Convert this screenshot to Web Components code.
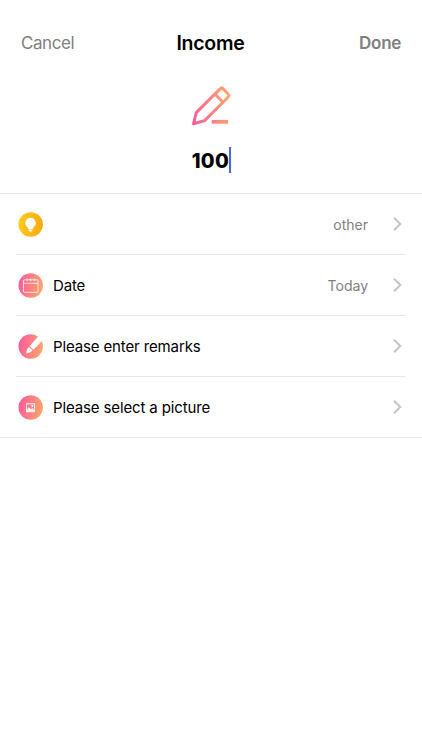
<!DOCTYPE html>
<html lang="en">
<head>
<meta charset="utf-8">
<title>Income</title>
<style>
html,body{margin:0;background:#fff}
body{font-family:Inter,"Liberation Sans",sans-serif;color:#000}
</style>
</head>
<body>
<income-page></income-page>

<template id="t-page">
<style>:host{display:flex;flex-direction:column;height:750px;overflow:hidden;background:#fff}</style>
<nav-bar><span slot="left">Cancel</span><span slot="title">Income</span><span slot="right">Done</span></nav-bar>
<amount-input>100</amount-input>
<entry-list>
<entry-row icon="bulb"><span slot="value">other</span></entry-row>
<entry-row icon="calendar">Date<span slot="value">Today</span></entry-row>
<entry-row icon="brush">Please enter remarks</entry-row>
<entry-row icon="photo">Please select a picture</entry-row>
</entry-list>
</template>

<template id="t-nav">
<style>
:host{display:grid;grid-template-columns:1fr auto 1fr;align-items:center;height:44px;padding:21px 21px 0;line-height:24px;white-space:nowrap}
.l,.r{font-size:17px;color:#808080}
.l{letter-spacing:-.45px}
.t{font-size:19.5px;font-weight:600;letter-spacing:-.27px;padding-right:1px}
.r{font-weight:600;text-align:right;letter-spacing:-.3px}
</style>
<div class="l"><slot name="left"></slot></div><div class="t"><slot name="title"></slot></div><div class="r"><slot name="right"></slot></div>
</template>

<template id="t-amount">
<style>
:host{display:flex;flex-direction:column;align-items:center;height:128px}
svg{display:block;width:44px;height:44px;margin-top:19px}
.v{display:flex;align-items:center;margin-top:18px;padding-left:1px;height:28px;font-size:20px;font-weight:800;line-height:28px;letter-spacing:.4px}
.v span{padding-top:2px}
.c{width:2px;height:26px;background:#4568dc}
</style>
<svg viewBox="0 0 44 44" fill="none" stroke="url(#g)" stroke-width="3" stroke-linejoin="round" stroke-linecap="round">
<defs><linearGradient id="g" gradientUnits="userSpaceOnUse" x1="3" y1="26" x2="41" y2="18"><stop stop-color="#f75f98"/><stop offset="1" stop-color="#ffa66b"/></linearGradient></defs>
<path d="M4.5 39.8 7.3 28.6 30.8 5.1Q32.6 3.3 34.4 5.1L39 9.7Q40.8 11.5 39 13.3L15.6 36.6ZM25.9 10 34.1 18.2"/>
<path d="M22.7 37.8H39" stroke-width="3.8" stroke-linecap="butt"/>
</svg>
<div class="v"><span><slot></slot></span><i class="c"></i></div>
</template>

<template id="t-list">
<style>:host{display:block;border-top:1px solid #e8e8ea;border-bottom:1px solid #e8e8ea}</style>
<slot></slot>
</template>

<template id="t-row">
<style>
:host{display:flex;align-items:center;box-sizing:border-box;height:61px;margin:0 16px;padding-left:2px;padding-right:4px;border-bottom:1px solid #e8e8ea;font-size:15px;line-height:20px;white-space:nowrap}
:host(:last-child){border-bottom:0;height:60px}
row-icon{margin-right:10px}
.label{flex:1;letter-spacing:-.13px;padding-top:1px}
.value{color:#808080;font-size:14px;margin-right:25px;padding-top:1px}
.chev{width:9px;height:14px;display:block}
</style>
<row-icon></row-icon><div class="label"><slot></slot></div><div class="value"><slot name="value"></slot></div>
<svg class="chev" viewBox="0 0 9 14" fill="none" stroke="#c5c5c9" stroke-width="2"><path d="M1 .8 7.3 7 1 13.2"/></svg>
</template>

<script>
function build(name, id, setup) {
  customElements.define(name, class extends HTMLElement {
    constructor() {
      super();
      this.attachShadow({mode: 'open'}).append(document.getElementById(id).content.cloneNode(true));
    }
    connectedCallback() { if (setup) setup(this); }
  });
}
const glyphs = {
  bulb: '<path d="M12.5 5.8a5.2 5.2 0 0 0-3.3 9.2Q10.3 16 10.4 17.4h4.2q.1-1.4 1.2-2.4A5.2 5.2 0 0 0 12.5 5.8Z" fill="#fff"/><path d="M10.7 18.5h3.6M11.5 19.7h2" stroke="#fff" stroke-width=".9"/>',
  calendar: '<g fill="none" stroke="#fff" stroke-opacity=".8" stroke-width="1"><rect x="5.5" y="6.8" width="14.5" height="12.6" rx="1"/><path d="M5.5 10.3H20M9 5.5V8M12.7 5.5V8M16.4 5.5V8"/></g>',
  brush: '<path d="M22.2 0 27 4 15.4 15.7 11.8 12.1Z" fill="#fff"/><path d="M11.1 12.9 14.6 16.4 12.5 18.3 8 19.4 9.2 15Z" fill="#fff"/>',
  photo: '<path fill="#fff" fill-opacity=".9" fill-rule="evenodd" d="M8 8.3h9v9H8ZM8.9 9.2v5.5l2-2.4 2.2 2 1.3-1.1 1.7 1.5V9.2Z"/><circle cx="14.3" cy="11" r=".9" fill="#fff"/>'
};
customElements.define('row-icon', class extends HTMLElement {
  constructor() { super(); this.attachShadow({mode: 'open'}); }
  draw(kind) {
    const [a, b] = kind === 'bulb' ? ['#fbcb1d', '#f9a90f'] : ['#fb5c98', '#ffa66b'];
    this.shadowRoot.innerHTML = `<style>:host{display:block;width:25px;height:25px;flex:none}svg{display:block}</style>
<svg width="25" height="25" viewBox="0 0 25 25"><defs><linearGradient id="g" x1="0" y1=".4" x2="1" y2=".6"><stop stop-color="${a}"/><stop offset="1" stop-color="${b}"/></linearGradient></defs><circle cx="12.7" cy="12.5" r="12.2" fill="url(#g)"/>${glyphs[kind]}</svg>`;
  }
});
build('nav-bar', 't-nav');
build('amount-input', 't-amount');
build('entry-list', 't-list');
build('entry-row', 't-row', el => el.shadowRoot.querySelector('row-icon').draw(el.getAttribute('icon')));
build('income-page', 't-page');
</script>
</body>
</html>
